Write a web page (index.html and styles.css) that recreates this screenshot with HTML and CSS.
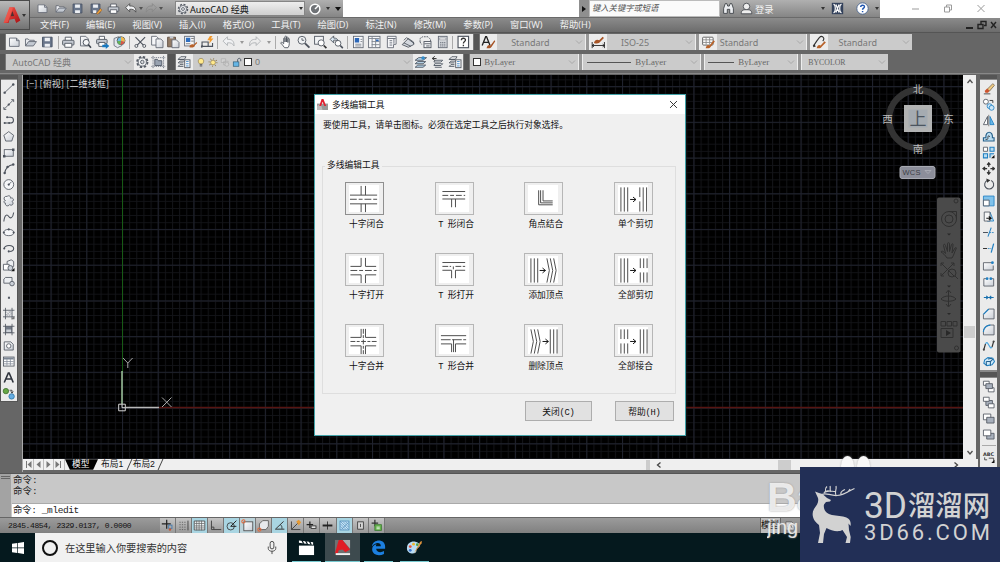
FILE: index.html
```html
<!DOCTYPE html>
<html lang="zh-CN">
<head>
<meta charset="utf-8">
<title>AutoCAD</title>
<link rel="stylesheet" href="styles.css">
</head>
<body>
<svg class="defs" width="0" height="0">
  <defs>
    <linearGradient id="g-red" x1="0" y1="0" x2="1" y2="1"><stop offset="0" stop-color="#ff5a4c"/><stop offset="1" stop-color="#a80f14"/></linearGradient>
    <linearGradient id="g-page" x1="0" y1="0" x2="1" y2="1"><stop offset="0" stop-color="#fff"/><stop offset="1" stop-color="#c9ced6"/></linearGradient>
  </defs>
  <symbol id="new" viewBox="0 0 16 16"><path d="M2.500 3.500h8l3 3v6.500h-11z" fill="url(#g-page)" stroke="#626873"/><path d="M10.500 3.500v3h3" fill="none" stroke="#626873"/></symbol>
  <symbol id="open" viewBox="0 0 16 16"><path d="M2.500 12.500v-8h3l1.500 1.500h5.500v2" fill="#e8eaee" stroke="#626873"/><path d="M2.500 12.500l3.500-5h9l-3.500 5z" fill="#c3c9d2" stroke="#626873"/></symbol>
  <symbol id="save" viewBox="0 0 16 16"><path d="M2.500 2.500h11v11h-11z" fill="#69768b" stroke="#465062"/><path d="M5 3h6v4H5zM5 10h6v3.500H5z" fill="#edf0f4"/></symbol>
  <symbol id="saveas" viewBox="0 0 16 16"><path d="M2.500 2.500h11v11h-11z" fill="#69768b" stroke="#465062"/><path d="M5 3h6v4H5zM5 10h4v3.500H5z" fill="#edf0f4"/><path d="M9 14l5-6 2 2-5 5z" fill="#eba23b" stroke="#8a4d20" stroke-width=".6"/></symbol>
  <symbol id="print" viewBox="0 0 16 16"><path d="M4.500 6V2.500h7V6" fill="#fff" stroke="#4d535d"/><rect x="1.500" y="6" width="13" height="5.500" rx="1" fill="#c3c8d0" stroke="#4d535d"/><path d="M4 9.500h8v4.500H4z" fill="#fff" stroke="#4d535d"/></symbol>
  <symbol id="preview" viewBox="0 0 16 16"><path d="M2.500 1.500h6l3 3v8h-9z" fill="url(#g-page)" stroke="#626873"/><circle cx="9" cy="8.500" r="3.500" fill="#f5f6f8" stroke="#3f4650"/><path d="M11.500 11l3 3.500" stroke="#3f4650" stroke-width="1.800"/></symbol>
  <symbol id="publish" viewBox="0 0 16 16"><path d="M4.500 5V1.500h6V5" fill="#fff" stroke="#4d535d"/><rect x="1.500" y="5" width="12" height="5" rx="1" fill="#c3c8d0" stroke="#4d535d"/><path d="M4 8.500h7V13H4z" fill="#fff" stroke="#4d535d"/><path d="M8 11h4V9l4 3.500-4 3.500v-2H8z" fill="#1878c0"/></symbol>
  <symbol id="dwf" viewBox="0 0 16 16"><path d="M2 4l5-2 4 2v8l-5 2.500L2 12z" fill="#e3e7ec" stroke="#68707c"/><circle cx="10" cy="6.500" r="4.500" fill="#6cbce8" stroke="#555"/><path d="M10 6.500V2a4.500 4.500 0 0 1 4 6z" fill="#f2b84b"/><path d="M10 6.500l4 1.500a4.500 4.500 0 0 1-5 3z" fill="#da5747"/><path d="M10 6.500L9 11a4.500 4.500 0 0 1-3.500-4z" fill="#64b257"/></symbol>
  <symbol id="cut" viewBox="0 0 16 16"><path d="M2.500 2.500l9 9M13.500 2.500l-9 9" stroke="#4d535d" stroke-width="1.300"/><circle cx="3.500" cy="12.500" r="1.700" fill="none" stroke="#4d535d"/><circle cx="12.500" cy="12.500" r="1.700" fill="none" stroke="#4d535d"/></symbol>
  <symbol id="copy" viewBox="0 0 16 16"><path d="M1.500 1.500h5.500l2 2v8h-7.500z" fill="#f6f7f9" stroke="#626873"/><path d="M6.500 4.500h5.500l2.500 2.500v7.500h-8z" fill="url(#g-page)" stroke="#626873"/></symbol>
  <symbol id="paste" viewBox="0 0 16 16"><path d="M1.500 2.500h9v11h-9z" fill="#927b66" stroke="#5c4c40"/><path d="M4 1h4v3H4z" fill="#c7cbd2"/><path d="M6.500 5.500h5l3 3v6h-8z" fill="url(#g-page)" stroke="#626873"/></symbol>
  <symbol id="match" viewBox="0 0 16 16"><rect x="1.500" y="1.500" width="11" height="11" fill="#f5f6f8" stroke="#626873"/><path d="M3 3h5v5H3z" fill="#2f6fc0"/><path d="M9 4h3M9 7h3M3 10h5" stroke="#777"/><path d="M7 14c0-3 3-4 5-3l3-3 1 1-3 3c0 2-3 3-6 2z" fill="#b8622a"/></symbol>
  <symbol id="block" viewBox="0 0 16 16"><path d="M2 8h7v5H2zM2 13l-1 1M9 13h5V9" fill="none" stroke="#4d535d" stroke-width="1.300"/><path d="M11 1l-3 5h3l-1 4 5-6h-3l2-3z" fill="#f29a2e"/><circle cx="2" cy="13" r="1.300" fill="#4d535d"/></symbol>
  <symbol id="undo" viewBox="0 0 16 16"><path d="M2 7l5-5v3c5-.5 8 2 7.500 7.500C13 9.500 10.500 8.500 7 9v3z" fill="#f1f2f4" stroke="currentColor"/></symbol>
  <symbol id="redo" viewBox="0 0 16 16"><path d="M14 7L9 2v3C4 4.500 1 7 1.500 12.500 3 9.500 5.500 8.500 9 9v3z" fill="none" stroke="currentColor"/></symbol>
  <symbol id="hand" viewBox="0 0 16 16"><path d="M6 14.500c-1.500-2-3-4-4.500-5.500 1-1.500 2.500 0 3.500 1V4c0-1 1.500-1 1.500 0v4-6c0-1 1.700-1 1.700 0v6-5c0-1 1.600-1 1.600 0v5.500-4c0-1 1.600-1 1.600 0V10c0 2-.5 3-1.500 4.500z" fill="#fff" stroke="#4d535d"/></symbol>
  <symbol id="zoomrt" viewBox="0 0 16 16"><circle cx="6.500" cy="6" r="4.500" fill="#f2f4f6" stroke="#4d535d"/><path d="M10 9.500l5 5" stroke="#4d535d" stroke-width="2.200"/><path d="M6.500 3.500V6h2.500" fill="none" stroke="#4d535d"/></symbol>
  <symbol id="zoomwin" viewBox="0 0 16 16"><rect x="1.500" y="1.500" width="10" height="9" fill="#f2f4f6" stroke="#4d535d"/><circle cx="9" cy="9" r="3.500" fill="#fff" stroke="#4d535d"/><path d="M12 12l3 3" stroke="#333" stroke-width="2"/></symbol>
  <symbol id="zoomprev" viewBox="0 0 16 16"><path d="M1 5l4-4v2.500c3 0 5 1 5 4-1-1.500-3-2-5-1.500V9z" fill="#dce8f2" stroke="#4d535d"/><circle cx="10" cy="9.500" r="3.300" fill="#fff" stroke="#4d535d"/><path d="M12.500 12l3 3" stroke="#4d535d" stroke-width="2"/></symbol>
  <symbol id="props" viewBox="0 0 16 16"><rect x="2.500" y="1.500" width="11" height="13" fill="#f7f8fa" stroke="#626873"/><path d="M4 3.500h5v5H4z" fill="#2c67b8"/><path d="M10.500 5h2M10.500 7.500h2M4.500 10.500h7M4.500 12.500h7" stroke="#7a808a"/></symbol>
  <symbol id="dc" viewBox="0 0 16 16"><rect x="1.500" y="1.500" width="13" height="13" fill="#f7f8fa" stroke="#626873"/><path d="M2 4h12M5.500 2v12M9.500 4v10M5 7.500h9M5 11h9" stroke="#7d838d"/><path d="M10 5h3v2h-3z" fill="#2c67b8"/></symbol>
  <symbol id="palette" viewBox="0 0 16 16"><path d="M3.500 1.500h10v9l-3 .5v3.500h-7z" fill="#f5f6f8" stroke="#626873"/><path d="M4 4h9M6 6.500h3M6 9h3M6 11.500h3M11 4v6" stroke="#626873"/></symbol>
  <symbol id="sheet" viewBox="0 0 16 16"><path d="M1 11l7-7 6 4v3l-6 3z" fill="#d4d8de" stroke="#4d535d"/><path d="M3 6l3-3 9 7M3 9l8 4" fill="none" stroke="#4d535d"/></symbol>
  <symbol id="markup" viewBox="0 0 16 16"><path d="M2 8V4l3-2h6l3 3v3M2 8l2 3" fill="none" stroke="#4d535d" stroke-dasharray="2 1"/><rect x="6.500" y="7.500" width="8" height="7" fill="#f5f6f8" stroke="#4d535d"/><path d="M7 10h7M9 12.500h4" stroke="#4d535d"/></symbol>
  <symbol id="calc" viewBox="0 0 16 16"><rect x="3.500" y="1.500" width="10" height="13" fill="#d7dade" stroke="#626873"/><path d="M5 3.500h7v2H5z" fill="#fff" stroke="#626873" stroke-width=".5"/><path d="M5.500 8.500h6M5.500 10.500h6M5.500 12.500h6" stroke="#626873" stroke-dasharray="1.500 .8"/></symbol>
  <symbol id="help" viewBox="0 0 16 16"><rect x="2" y="1.500" width="12" height="13" fill="#fff" stroke="#4d535d" stroke-width="1.300"/><path d="M5.800 6c0-3 4.700-3 4.700-.3 0 1.600-2.400 1.900-2.400 3.900M8.100 11.200v1.600" fill="none" stroke="#333" stroke-width="1.500"/></symbol>
  <symbol id="gear" viewBox="0 0 16 16"><circle cx="8" cy="8" r="6" fill="none" stroke="#555b65" stroke-width="2" stroke-dasharray="2.700 2"/><circle cx="8" cy="8" r="4.700" fill="#eef0f2" stroke="#555b65"/><circle cx="8" cy="8" r="2" fill="#d8dade" stroke="#555b65"/></symbol>
  <symbol id="wsave" viewBox="0 0 16 16"><path d="M2 1v14M14 1v14M0 3h16M0 13h16" stroke="#6b7280" stroke-dasharray="1.500 1"/><path d="M4 5h3l1 1.500h4V12H4z" fill="#98a2b0" stroke="#4d5664"/></symbol>
  <symbol id="layers" viewBox="0 0 16 16"><path d="M1 5l3-3h6L8 5zM1 9l2-2h6M1 13l2-2h4M1 5h7M1 9h6M1 13h6" fill="#f4f5f7" stroke="#4d535d"/><rect x="8.500" y="5.500" width="6" height="9" fill="#fff" stroke="#4d535d"/><path d="M10 7.500h3M10 10h3M10 12.500h3" stroke="#367fc0"/></symbol>
  <symbol id="laystack" viewBox="0 0 16 16"><path d="M1 6l4-3h9l-4 3zM1 10l3-2.500h9L10 10zM1 14l3-2.500h9L10 14z" fill="#bcd9ee" stroke="#48515e"/><circle cx="10" cy="3.500" r="2" fill="#318bc9"/></symbol>
  <symbol id="layprev" viewBox="0 0 16 16"><path d="M4 6h9l-2 2H3zM4 10h9l-2 2H3zM4 14h8" fill="#fff" stroke="#48515e"/><path d="M6 4H1.500M4 1.500L1 4l3 2" fill="none" stroke="#222"/></symbol>
  <symbol id="bulb" viewBox="0 0 16 16"><path d="M5.500 10C2 6 4 1.500 8 1.500S14 6 10.500 10z" fill="#ffe98b" stroke="#8a7440"/><path d="M6 11.500h4M6 13.500h4" stroke="#555" stroke-width="1.500"/></symbol>
  <symbol id="sun" viewBox="0 0 16 16"><circle cx="8" cy="8" r="6" fill="none" stroke="#8a7440" stroke-width="2.500" stroke-dasharray="1 3.710"/><circle cx="8" cy="8" r="3.800" fill="#ffe98b" stroke="#8a7440"/></symbol>
  <symbol id="vpf" viewBox="0 0 16 16"><path d="M2 2h7v6H2zM6 6h7v6H6z" fill="#d2d2d2" stroke="#a9a9a9"/><circle cx="11" cy="11" r="3" fill="#d0d0d0" stroke="#a9a9a9"/></symbol>
  <symbol id="unlock" viewBox="0 0 16 16"><path d="M9 7V4c0-3.500 5-3.500 5 0v2" fill="none" stroke="#4f5966" stroke-width="1.500"/><rect x="2" y="7" width="9" height="7" fill="#65b5e5" stroke="#27536f"/></symbol>
  <symbol id="textstyle" viewBox="0 0 16 16"><path d="M1 12L5 2h1l4 10M2.500 8.500h6" fill="none" stroke="#222" stroke-width="1.500"/><path d="M6 15c1-4 3-4 4.500-3L15 6l1 1-4 6c-1 2-3 2.500-6 2z" fill="#a75527"/></symbol>
  <symbol id="dimstyle" viewBox="0 0 16 16"><path d="M1 8v7M15 8v7M1 12h14M3 10.500L1 12l2 1.500M13 10.500l2 1.500-2 1.500" fill="none" stroke="#222"/><path d="M3 9c1-4 4-4 6-3l4-4 1.500 1.500-4 4C9 10 6 10 3 9z" fill="#a75527"/></symbol>
  <symbol id="tabstyle" viewBox="0 0 16 16"><rect x="1.500" y="2.500" width="12" height="9" rx="1" fill="#fff" stroke="#555"/><path d="M1.500 5.500h12M1.500 8.500h12M5.500 3v8M9.500 3v8" stroke="#8a8a8a"/><path d="M5 15c1-4 3-4 4.500-3L14 6l1.500 1.500L11 13c-1 2-3 2.500-6 2z" fill="#b8622a"/></symbol>
  <symbol id="mlstyle" viewBox="0 0 16 16"><path d="M1 13l4-6 3-4c3-3 7 0 4 4" fill="none" stroke="#333" stroke-width="1.300"/><path d="M1 14l1-4 2 3z" fill="#333"/><path d="M5 15c1-4 3-4 4.500-3L14 7l1.500 1.500L11 13c-1 2-3 2.500-6 2z" fill="#b8622a"/></symbol>

  <symbol id="line" viewBox="0 0 16 16"><path d="M3 13L13.500 3" stroke="#4d535d"/><circle cx="3" cy="13" r="1.500" fill="#4d535d"/><circle cx="13.500" cy="3" r="1.500" fill="#4d535d"/></symbol>
  <symbol id="xline" viewBox="0 0 16 16"><path d="M2.500 13.500L13.500 2.500M2 11v3h3M11 2h3v3" fill="none" stroke="#4d535d"/><circle cx="8" cy="8" r="1.400" fill="#4d535d"/></symbol>
  <symbol id="pline" viewBox="0 0 16 16"><path d="M6 4h4c5 0 5 7 0 7H3" fill="none" stroke="#4d535d" stroke-width="1.300"/><circle cx="6" cy="4" r="1.300" fill="#4d535d"/><circle cx="3" cy="11" r="1.300" fill="#4d535d"/><circle cx="8.500" cy="11" r="1.300" fill="#4d535d"/></symbol>
  <symbol id="polygon" viewBox="0 0 16 16"><path d="M8 2l6 4.500-2.300 7H4.300L2 6.500z" fill="url(#g-page)" stroke="#4d535d"/></symbol>
  <symbol id="rect" viewBox="0 0 16 16"><rect x="2.500" y="4.500" width="11" height="8" fill="url(#g-page)" stroke="#4d535d"/><path d="M12 3h3v3h-3zM1 11h3v3H1z" fill="#4d535d"/></symbol>
  <symbol id="arc" viewBox="0 0 16 16"><path d="M3 13.500C4 8 7 4 13.500 3" fill="none" stroke="#4d535d" stroke-width="1.300"/><circle cx="3" cy="13.500" r="1.500" fill="#4d535d"/><circle cx="6.500" cy="6" r="1.500" fill="#4d535d"/><circle cx="13.500" cy="3" r="1.500" fill="#4d535d"/></symbol>
  <symbol id="circle" viewBox="0 0 16 16"><circle cx="8" cy="8" r="6" fill="#f6f7f9" stroke="#4d535d"/><path d="M8 8l3.500-3.500" stroke="#4d535d"/><circle cx="8" cy="8" r="1.400" fill="#4d535d"/></symbol>
  <symbol id="cloud" viewBox="0 0 16 16"><path d="M4 8C1 7 2 2 6 3c2-2 5 0 4 2 4-1 5 3 2 4 3 3 0 6-3 4-2 3-6 1-5-2-3 0-2-3 0-3z" fill="url(#g-page)" stroke="#4d535d"/></symbol>
  <symbol id="spline" viewBox="0 0 16 16"><path d="M2 14C3 5 6 5 8 8s5 2 6-5" fill="none" stroke="#4d535d" stroke-width="1.300"/></symbol>
  <symbol id="ellipse" viewBox="0 0 16 16"><ellipse cx="8" cy="8" rx="6" ry="3.800" fill="#f6f7f9" stroke="#4d535d"/><circle cx="2" cy="8" r="1.300" fill="#4d535d"/><circle cx="14" cy="8" r="1.300" fill="#4d535d"/><circle cx="8" cy="4.200" r="1.300" fill="#4d535d"/></symbol>
  <symbol id="elarc" viewBox="0 0 16 16"><path d="M2.500 8C3 3 14 3 14 8c0 2-2 3.500-5 3.500" fill="none" stroke="#4d535d" stroke-width="1.300"/><circle cx="2.500" cy="8" r="1.300" fill="#4d535d"/><circle cx="8" cy="11.500" r="1.300" fill="#4d535d"/></symbol>
  <symbol id="insert" viewBox="0 0 16 16"><path d="M6 3l5-2 3 2v6l-3 2H6z" fill="#eceef1" stroke="#4d535d"/><path d="M1.500 6.500h7v7h-7z" fill="#fff" stroke="#4d535d"/><circle cx="10" cy="11" r="3" fill="#ccd1d9" stroke="#4d535d"/><path d="M15 11v4h-4z" fill="#111"/></symbol>
  <symbol id="mkblock" viewBox="0 0 16 16"><path d="M2 10V5l2-2h8v6" fill="#eceef1" stroke="#4d535d"/><path d="M2 10h7" stroke="#4d535d"/><circle cx="12" cy="10.500" r="2.800" fill="#ccd1d9" stroke="#4d535d"/></symbol>
  <symbol id="point" viewBox="0 0 16 16"><rect x="7" y="7" width="2.500" height="2.500" fill="#555b65"/></symbol>
  <symbol id="hatch" viewBox="0 0 16 16"><path d="M4 1v14M12 1v14M1 4h14M1 12h14" stroke="#4d535d"/><path d="M4 5l7 7M4 8l4 4M7 4l5 5M4 11l8-7M7 12l5-5" stroke="#9298a2" stroke-width=".7"/><path d="M15 11v4h-4z" fill="#777"/></symbol>
  <symbol id="grad" viewBox="0 0 16 16"><path d="M4 4h8v8H4z" fill="#737b87"/><path d="M5 8h6v3H5z" fill="#cbd0d6"/><path d="M4 1v14M12 1v14M1 4h14M1 12h14" stroke="#4d535d"/></symbol>
  <symbol id="region" viewBox="0 0 16 16"><path d="M2.500 3.500h8l3 3v7h-11z" fill="url(#g-page)" stroke="#4d535d"/><circle cx="8" cy="8.500" r="2.700" fill="#fff" stroke="#4d535d"/></symbol>
  <symbol id="table" viewBox="0 0 16 16"><rect x="1.500" y="2.500" width="13" height="11" fill="#fff" stroke="#4d535d"/><path d="M2 3h12v2.500H2z" fill="#7d8795"/><path d="M2 8h12M2 10.800h12M5.800 5v8M10 5v8" stroke="#88909c"/></symbol>
  <symbol id="mtext" viewBox="0 0 16 16"><path d="M2.500 14L7.500 2.500h1l5 11.500M4.500 9.800h7" fill="none" stroke="#30353e" stroke-width="2"/></symbol>
  <symbol id="addsel" viewBox="0 0 16 16"><circle cx="4.500" cy="5" r="3.300" fill="#65a744" stroke="#3d6e2c"/><circle cx="11.500" cy="11.500" r="3.300" fill="#66ade2" stroke="#2f77a8"/><path d="M9 4h3v3M10.500 5.500L12 7.500l1.500-2" fill="none" stroke="#333"/></symbol>

  <symbol id="erase" viewBox="0 0 16 16"><path d="M6 9l7-7 2 2-6 7z" fill="#efca82" stroke="#7a6b50"/><path d="M3 11l3-3 3 3-2 2H4z" fill="#cd532d"/><path d="M2 14.500h8" stroke="#333"/></symbol>
  <symbol id="mcopy" viewBox="0 0 16 16"><circle cx="4.500" cy="4.500" r="3" fill="#fff" stroke="#4d535d"/><circle cx="9" cy="10" r="3" fill="#cde7f8" stroke="#2180c2"/><circle cx="11.500" cy="12" r="3" fill="#cde7f8" stroke="#2180c2"/><path d="M9 3h4v3" fill="none" stroke="#222"/></symbol>
  <symbol id="mirror" viewBox="0 0 16 16"><path d="M6.500 3v10H1.500z" fill="#fff" stroke="#4d535d"/><path d="M9.500 3v10h5z" fill="#66b7e8" stroke="#2180c2"/><path d="M8 1v14" stroke="#333" stroke-width=".7"/></symbol>
  <symbol id="offset" viewBox="0 0 16 16"><path d="M1.500 13.500v-4h3c-1-9 9-9 8 0h2v4z" fill="#b9dcf1" stroke="#2a638c" stroke-width="1.400"/><path d="M4 11.500h2c1 0 1-1 1-3s2-2 2 0" fill="none" stroke="#333"/></symbol>
  <symbol id="array" viewBox="0 0 16 16"><path d="M1.500 1.500h5v5h-5z" fill="#fff" stroke="#4d535d"/><path d="M9.500 1.500h5v5h-5zM1.500 9.500h5v5h-5zM9.500 14.500v-5h5" fill="#b9dcf1" stroke="#2180c2" stroke-width="1.300"/><path d="M15 11v4h-4z" fill="#111"/></symbol>
  <symbol id="move" viewBox="0 0 16 16"><path d="M8 1v14M1 8h14M6 3.500L8 1l2 2.500M6 12.500L8 15l2-2.500M3.500 6L1 8l2.500 2M12.500 6L15 8l-2.500 2" fill="none" stroke="#333" stroke-width="1.500"/><rect x="6" y="6" width="4" height="4" fill="#ececec"/></symbol>
  <symbol id="rotate" viewBox="0 0 16 16"><path d="M6 3a5.500 5.500 0 1 0 5 0" fill="none" stroke="#4d535d" stroke-width="1.300"/><path d="M5 .500l5 2.200-4 3z" fill="#333"/></symbol>
  <symbol id="scale" viewBox="0 0 16 16"><path d="M1.500 2.500h13v12h-13z" fill="#80c2eb" stroke="#2180c2"/><path d="M1.500 7.500h7v7h-7z" fill="#fff" stroke="#4d535d"/></symbol>
  <symbol id="stretch" viewBox="0 0 16 16"><path d="M9.500 2.500l4.500 11H6" fill="#b9dcf1" stroke="#2180c2"/><path d="M2.500 2.500h7v11h-7z" fill="#f6f6f6" stroke="#4d535d"/><path d="M5 10h5M8 8l3 2-3 2" fill="none" stroke="#111" stroke-width="1.300"/></symbol>
  <symbol id="trim" viewBox="0 0 16 16"><path d="M1 8h6" stroke="#4d535d" stroke-width="1.300"/><path d="M11 2L7 13" stroke="#2180c2" stroke-width="1.300"/><path d="M9 8h6" stroke="#2180c2" stroke-dasharray="2 1"/></symbol>
  <symbol id="extend" viewBox="0 0 16 16"><path d="M1 8h5" stroke="#333" stroke-width="1.300"/><path d="M7 8h4" stroke="#2180c2" stroke-dasharray="2 1"/><path d="M14 2l-3 11" stroke="#2180c2" stroke-width="1.500"/></symbol>
  <symbol id="brkpt" viewBox="0 0 16 16"><path d="M12 4.500H1.500v9h12V8" fill="url(#g-page)" stroke="#4d535d"/><circle cx="12.500" cy="4.500" r="1.700" fill="#2180c2"/></symbol>
  <symbol id="brk" viewBox="0 0 16 16"><path d="M5 4.500H2v9h12v-9h-3" fill="url(#g-page)" stroke="#4d535d"/><circle cx="6" cy="4.500" r="1.700" fill="#2180c2"/><circle cx="10.500" cy="4.500" r="1.700" fill="#2180c2"/></symbol>
  <symbol id="join" viewBox="0 0 16 16"><path d="M2 8h12M5 6l2 2-2 2M11 6L9 8l2 2" fill="none" stroke="#176fae" stroke-width="1.400"/></symbol>
  <symbol id="chamfer" viewBox="0 0 16 16"><path d="M1.500 14.500V9L8 2.500h6.500v12z" fill="url(#g-page)" stroke="#4d535d"/><path d="M1.500 9L8 2.500" stroke="#2180c2" stroke-width="1.500"/></symbol>
  <symbol id="fillet" viewBox="0 0 16 16"><path d="M1.500 14.500V11c0-5 4-8.500 8.500-8.500h4.500v12z" fill="url(#g-page)" stroke="#4d535d"/><path d="M1.500 11C1.500 6 5.500 2.500 10 2.500" fill="none" stroke="#2180c2" stroke-width="1.500"/></symbol>
  <symbol id="blend" viewBox="0 0 16 16"><path d="M2 13l2-7M14 3l-2 7" stroke="#333" stroke-width="1.500"/><path d="M4 6c3-6 5 8 8 4" fill="none" stroke="#4ca6e0" stroke-width="1.500"/><circle cx="2" cy="13" r="1.300" fill="#444"/><circle cx="14" cy="3" r="1.300" fill="#444"/></symbol>
  <symbol id="explode" viewBox="0 0 16 16"><path d="M3 6l4-3 6 1 2 4-3 4-6 1-4-3z" fill="#d0eafa" stroke="#2180c2" stroke-width="1.300"/><path d="M5 8h5v5M10 8l3-3M5 8v5M7 5l5-1" fill="none" stroke="#26618d" stroke-width="1.300"/></symbol>
  <symbol id="ord1" viewBox="0 0 16 16"><path d="M1.500 1.500h7v5h-7zM7.500 9.500h7v5h-7z" fill="#fff" stroke="#4d535d"/><path d="M4.500 4.500h8v6h-8z" fill="#a8b0bc" stroke="#4d535d"/></symbol>
  <symbol id="ord2" viewBox="0 0 16 16"><path d="M4.500 5.500h8v6h-8z" fill="#a8b0bc" stroke="#4d535d"/><path d="M1.500 1.500h7v5h-7zM7.500 9.500h7v5h-7z" fill="#fff" stroke="#4d535d"/></symbol>
  <symbol id="ord3" viewBox="0 0 16 16"><path d="M1.500 2.500h9v7h-9z" fill="#fff" stroke="#4d535d"/><path d="M5.500 6.500h9v7h-9z" fill="#a8b0bc" stroke="#4d535d"/></symbol>
  <symbol id="ord4" viewBox="0 0 16 16"><path d="M5.500 6.500h9v7h-9z" fill="#a8b0bc" stroke="#4d535d"/><path d="M1.500 2.500h9v7h-9z" fill="#fff" stroke="#4d535d"/></symbol>
  <symbol id="chev" viewBox="0 0 8 8"><path d="M1 2.500l3 3 3-3" fill="none" stroke="#a9a9a9"/></symbol>
  <symbol id="acad" viewBox="0 0 24 24"><path d="M2 21L9 2h6l7 16-5 3-2-5-6 1-1 4z" fill="url(#g-red)"/><path d="M10.500 13l2-6.500 2 6z" fill="#4e3030"/><path d="M9 2l4 1-6 17-5 1z" fill="#f7695b" opacity=".55"/></symbol>
</svg>

<header class="app-head">
  <div class="app-btn"><svg class="app-logo"><use href="#acad"/></svg><i class="tri"></i></div>
  <div class="head-rows">
    <div class="titlebar">
      <div class="qat">
        <svg class="q"><use href="#new"/></svg><svg class="q"><use href="#open"/></svg><svg class="q"><use href="#save"/></svg><svg class="q"><use href="#saveas"/></svg><svg class="q"><use href="#print"/></svg><svg class="q undo"><use href="#undo"/></svg><i class="tri q-tri"></i><svg class="q faded"><use href="#redo"/></svg><i class="tri q-tri"></i>
      </div>
      <div class="ws-combo"><svg class="ws-gear"><use href="#gear"/></svg><span>AutoCAD 经典</span><i class="tri"></i></div>
      <div class="qat-end"><svg viewBox="0 0 16 16"><circle cx="8" cy="8" r="6.500" fill="#6f7276" stroke="#fff" stroke-width="2"/><path d="M8 8l4-4" stroke="#fff" stroke-width="2"/></svg><i class="tri"></i><i class="tri big"></i></div>
      <div class="caption"></div>
      <div class="search-arrow"></div>
      <div class="search">键入关键字或短语</div>
      <div class="info">
        <svg viewBox="0 0 16 16" class="binoc"><path d="M2 14V8l2-6h2l1 3h2l1-3h2l2 6v6H9.500V9h-3v5z" fill="#eceef1" stroke="#33373c"/></svg>
        <svg viewBox="0 0 16 16" class="user"><circle cx="8" cy="5.500" r="4" fill="#eee" stroke="#3b3f45"/><path d="M1.500 14.500c0-5 3-5 6.500-5s6.500 0 6.500 5z" fill="#eee" stroke="#3b3f45"/></svg>
        <span class="login">登录</span><i class="tri"></i>
        <svg viewBox="0 0 16 16" class="exch"><rect x="1" y="1" width="14" height="14" fill="#33415b"/><path d="M3 3c3 0 3 10 0 10M13 3c-3 0-3 10 0 10M6 3l4 10M10 3L6 13" stroke="#fff" stroke-width="1.500" fill="none"/></svg>
        <svg viewBox="0 0 16 16" class="ask"><circle cx="8" cy="8" r="7" fill="#fff" stroke="#3b5b8c"/><path d="M5.800 6.200c0-3 4.600-3 4.600-.4 0 1.700-2.300 1.800-2.300 3.700M8.100 11v1.700" fill="none" stroke="#1f55b0" stroke-width="1.800"/></svg>
        <i class="tri"></i>
      </div>
      <svg class="winctl" viewBox="0 0 120 17"><path d="M32 8.500h7M64.500 6.500h5v5h-5zM66.500 6.500v-2h5v5h-2M97.500 4.500l7 7M104.500 4.500l-7 7" fill="none" stroke="#9b9b9b"/></svg>
    </div>
    <nav class="menubar">
      <span>文件(F)</span><span>编辑(E)</span><span>视图(V)</span><span>插入(I)</span><span>格式(O)</span><span>工具(T)</span><span>绘图(D)</span><span>标注(N)</span><span>修改(M)</span><span>参数(P)</span><span>窗口(W)</span><span>帮助(H)</span>
      <svg class="docctl" viewBox="0 0 34 12"><path d="M1 9h7" stroke="#222" stroke-width="2"/><path d="M13 5.500h5v4h-5zM16 5V2.500h5v4h-2M26 3l5 6M31 3l-5 6" fill="none" stroke="#222" stroke-width="1.400"/></svg>
    </nav>
  </div>
</header>

<div class="tools row1">
  <i class="grip"></i>
  <div class="strip std">
    <svg class="t"><use href="#new"/></svg><svg class="t"><use href="#open"/></svg><svg class="t"><use href="#save"/></svg><i class="sep"></i>
    <svg class="t"><use href="#print"/></svg><svg class="t"><use href="#preview"/></svg><svg class="t"><use href="#publish"/></svg><svg class="t"><use href="#dwf"/></svg><i class="sep"></i>
    <svg class="t"><use href="#cut"/></svg><svg class="t"><use href="#copy"/></svg><svg class="t"><use href="#paste"/></svg><svg class="t"><use href="#match"/></svg><svg class="t"><use href="#block"/></svg><i class="sep"></i>
    <svg class="t dim"><use href="#undo"/></svg><i class="tri t-tri"></i><svg class="t dim"><use href="#redo"/></svg><i class="tri t-tri"></i><i class="sep"></i>
    <svg class="t"><use href="#hand"/></svg><svg class="t"><use href="#zoomrt"/></svg><svg class="t"><use href="#zoomwin"/></svg><svg class="t"><use href="#zoomprev"/></svg><i class="sep"></i>
    <svg class="t"><use href="#props"/></svg><svg class="t"><use href="#dc"/></svg><svg class="t"><use href="#palette"/></svg><svg class="t"><use href="#sheet"/></svg><svg class="t"><use href="#markup"/></svg><svg class="t"><use href="#calc"/></svg><i class="sep"></i>
    <svg class="t"><use href="#help"/></svg>
  </div>
  <i class="grip wide"></i>
  <div class="strip styles">
    <svg class="t"><use href="#textstyle"/></svg><div class="combo w-text"><span>Standard</span><svg><use href="#chev"/></svg></div><i class="bar"></i>
    <svg class="t"><use href="#dimstyle"/></svg><div class="combo w-dim"><span>ISO-25</span><svg><use href="#chev"/></svg></div><i class="bar"></i>
    <svg class="t"><use href="#tabstyle"/></svg><div class="combo w-tab"><span>Standard</span><svg><use href="#chev"/></svg></div><i class="bar"></i>
    <svg class="t"><use href="#mlstyle"/></svg><div class="combo w-ml"><span>Standard</span><svg><use href="#chev"/></svg></div>
  </div>
</div>
<div class="tools row2">
  <i class="grip"></i>
  <div class="strip"><div class="combo w-ws"><span>AutoCAD 经典</span><svg><use href="#chev"/></svg></div><svg class="t"><use href="#gear"/></svg><svg class="t"><use href="#wsave"/></svg></div>
  <i class="grip wide first"></i>
  <div class="strip"><svg class="t"><use href="#layers"/></svg>
    <div class="combo w-layer"><svg class="l"><use href="#bulb"/></svg><svg class="l"><use href="#sun"/></svg><svg class="l"><use href="#vpf"/></svg><svg class="l"><use href="#unlock"/></svg><i class="swatch"></i><span>0</span><svg><use href="#chev"/></svg></div>
    <svg class="t"><use href="#laystack"/></svg><svg class="t"><use href="#layprev"/></svg><svg class="t"><use href="#layers"/></svg></div>
  <i class="grip wide second"></i>
  <div class="strip serif">
    <div class="combo w-color"><i class="swatch"></i><span>ByLayer</span><svg><use href="#chev"/></svg></div><i class="bar"></i>
    <div class="combo w-lt"><i class="ln long"></i><span>ByLayer</span><svg><use href="#chev"/></svg></div><i class="bar"></i>
    <div class="combo w-lw"><i class="ln"></i><span>ByLayer</span><svg><use href="#chev"/></svg></div><i class="bar"></i>
    <div class="combo w-ps"><span>BYCOLOR</span><svg><use href="#chev"/></svg></div>
  </div>
</div>

<main class="work">
  <aside class="vtools left">
    <i class="vgrip"></i>
    <svg><use href="#line"/></svg><svg><use href="#xline"/></svg><svg><use href="#pline"/></svg><svg><use href="#polygon"/></svg><svg><use href="#rect"/></svg><svg><use href="#arc"/></svg><svg><use href="#circle"/></svg><svg><use href="#cloud"/></svg><svg><use href="#spline"/></svg><svg><use href="#ellipse"/></svg><svg><use href="#elarc"/></svg><svg><use href="#insert"/></svg><svg><use href="#mkblock"/></svg><svg><use href="#point"/></svg><svg><use href="#hatch"/></svg><svg><use href="#grad"/></svg><svg><use href="#region"/></svg><svg><use href="#table"/></svg><svg><use href="#mtext"/></svg><svg><use href="#addsel"/></svg>
  </aside>
  <section class="doc">
    <div class="doc-top">
      <svg class="canvas" viewBox="23 75 940 384">
        <defs>
          <pattern id="minor" x="122" y="408" width="7.143" height="7.143" patternUnits="userSpaceOnUse"><path d="M.5 0v7.143M0 .5h7.143" stroke="#131418"/></pattern>
          <pattern id="major" x="122" y="407.500" width="35.714" height="35.714" patternUnits="userSpaceOnUse"><path d="M.5 0v35.714M0 .5h35.714" stroke="#1f222d"/></pattern>
        </defs>
        <rect x="23" y="75" width="940" height="384" fill="#000"/>
        <rect x="23" y="75" width="940" height="384" fill="url(#minor)"/>
        <rect x="23" y="75" width="940" height="384" fill="url(#major)"/>
        <path d="M122.500 75v297" stroke="#175a15"/>
        <path d="M159 407.500h804" stroke="#571512" stroke-width="1.300"/>
        <path d="M122 371v33" stroke="#9fc69d" stroke-width="1.500"/>
        <path d="M126 407.500h33" stroke="#b9b9b9" stroke-width="1.500"/>
        <path d="M118.700 404.200h6.600v6.600h-6.600zM122 404.200v3.500h3.500" fill="none" stroke="#d5d5d5"/>
        <path d="M123 358l4.800 5 4.800-5M127.800 363v5M162 397.500l9.500 9.500M171.500 397.500l-9.500 9.500" fill="none" stroke="#aaa"/>
        <text x="26" y="87.300" class="vp-label" textLength="83">[−] [俯视] [二维线框]</text>
        <circle cx="918" cy="119" r="29" fill="none" stroke="#333" stroke-width="6.500"/>
        <path d="M904 105h28v27h-28z" fill="#b2b3b3"/><path d="M908.500 109.500h19v18h-19z" fill="#a5abb1"/>
        <text x="918" y="125" class="cube-face">上</text>
        <g class="compass"><text x="918" y="92.500">北</text><text x="918" y="153">南</text><text x="887.500" y="123">西</text><text x="948.500" y="123">东</text></g>
        <rect x="900" y="166.500" width="35" height="12" rx="2" fill="#8c8e9a" stroke="#a9abb3"/>
        <text x="902.500" y="174.500" class="wcs" textLength="18">WCS</text><path d="M925 170.500h6l-3 3z" fill="none" stroke="#b5b6be" stroke-width=".7"/>
        <rect x="937" y="197.500" width="23.500" height="155" rx="2" fill="#4a4a4a"/>
        <g fill="none" stroke="#303030">
          <circle cx="956" cy="201" r="2"/><circle cx="949" cy="219" r="7.500"/><circle cx="949" cy="219" r="4"/><path d="M949 211.500h7.500v7.500"/>
          <path d="M947 258c-2-3-4-5-6-6 1-2 3 0 4.500 1.500l-2-8c0-2 2-1 2 0l2 6v-8c0-1 2-1 2 0v8l2-7c.5-1 2-1 1.500.5l-1 8 3-5c1-1 2 0 1 1-2 4-2 6-4 9z"/>
          <path d="M941 263l13 13M954 263l-13 13M941 266v-3h3M951 263h3v3M941 273v3h3"/><circle cx="952" cy="273" r="4"/><path d="M955 276l3 3"/>
          <path d="M948.500 291v15M941 299c3-4 12-4 15 0-3 3-12 3-15 0M946 293l2.500-3 2.500 3M946 304l2.500 3 2.500-3"/>
          <path d="M941 321.500h4.500v4.500H941zM947 321.500h4.500v4.500H947zM953 321.500h4v4.500h-4zM941 328.500h12v9h-12z"/><circle cx="956.500" cy="348" r="2"/>
        </g>
        <path d="M947 233.500h4l-2 2zM947 285.500h4l-2 2zM947 313h4l-2 2zM946 330l5 3-5 3z" fill="#292929"/>
      </svg>
      <div class="vscroll"><svg viewBox="0 0 12 12"><path d="M3.500 8L6 5l2.500 3" fill="none" stroke="#4f4f4f" stroke-width="1.300"/></svg><i class="thumb"></i><svg viewBox="0 0 12 12"><path d="M3.500 4L6 7l2.500-3" fill="none" stroke="#4f4f4f" stroke-width="1.300"/></svg></div>
    </div>
    <div class="tabs">
      <svg class="tabnav" viewBox="0 0 42 11"><path d="M0 0h42v11H0z" fill="#f1f1f1"/><path d="M10.500 0v11M20.500 0v11M30.500 0v11M41.500 0v11" stroke="#bbb"/><path d="M3.500 2v7M37.500 2v7" stroke="#777"/><path d="M8.500 2v7l-4-3.500zM17.500 2v7l-4-3.500zM23.500 2v7l4-3.500zM32.500 2v7l4-3.500z" fill="#777"/></svg>
      <div class="tab active"><svg viewBox="0 0 34 11"><path d="M0 0h34l-5 11H5z" fill="#000"/></svg><span>模型</span></div>
      <div class="tab"><span>布局1</span><i></i></div>
      <div class="tab"><span>布局2</span><i></i></div>
      <div class="hscroll"><i class="split"></i><svg viewBox="0 0 10 10"><path d="M6.500 2.500L3.500 5l3 2.500" fill="none" stroke="#444" stroke-width="1.300"/></svg><i class="hthumb"></i><svg viewBox="0 0 10 10"><path d="M3.500 2.500l3 2.500-3 2.500" fill="none" stroke="#444" stroke-width="1.300"/></svg></div>
    </div>
  </section>
  <aside class="vtools right">
    <i class="vgrip"></i>
    <svg><use href="#erase"/></svg><svg><use href="#mcopy"/></svg><svg><use href="#mirror"/></svg><svg><use href="#offset"/></svg><svg><use href="#array"/></svg><svg><use href="#move"/></svg><svg><use href="#rotate"/></svg><svg><use href="#scale"/></svg><svg><use href="#stretch"/></svg><svg><use href="#trim"/></svg><svg><use href="#extend"/></svg><svg><use href="#brkpt"/></svg><svg><use href="#brk"/></svg><svg><use href="#join"/></svg><svg><use href="#chamfer"/></svg><svg><use href="#fillet"/></svg><svg><use href="#blend"/></svg><svg><use href="#explode"/></svg>
    <i class="vgrip mid"></i>
    <svg><use href="#ord1"/></svg><svg><use href="#ord2"/></svg><svg><use href="#ord3"/></svg><svg><use href="#ord4"/></svg><i class="vsep"></i>
    <svg viewBox="0 0 16 16"><text x="1" y="7" class="abc">ABC</text><path d="M3 9v3h3M8 10h6v4" fill="none" stroke="#333"/><path d="M15 12v4h-4z" fill="#111"/></svg><svg><use href="#ord3"/></svg>
  </aside>
</main>

<section class="cmd">
  <div class="cmd-grip"><i></i></div>
  <div class="cmd-body">
    <div class="history"><div>命令:</div><div>命令:</div></div>
    <div class="prompt">命令: _mledit</div>
  </div>
</section>

<footer class="status">
  <div class="coords">2845.4854, 2329.0137, 0.0000</div>
  <div class="modes">
    <span><svg viewBox="0 0 16 16"><path d="M7 1v11M1 6h11" stroke="#222" stroke-width="1.500"/><rect x="9.500" y="7.500" width="4" height="4" fill="none" stroke="#3a76b0"/><circle cx="11" cy="13" r="1.500" fill="#c65a35"/></svg></span>
    <span><svg viewBox="0 0 16 16"><path d="M3 4h8M3 7h8M3 10h8M3 13h8" stroke="#555" stroke-dasharray="1.500 1.500"/><path d="M13.500 2v12" stroke="#333"/></svg></span>
    <span class="on"><svg viewBox="0 0 16 16"><path d="M1.500 2.500h13v11h-13z" fill="#eef4f6" stroke="#444"/><path d="M2 5.500h12M2 8.500h12M2 11h12M4.500 2v12M7.500 2v12M10.500 2v12" stroke="#666" stroke-width=".9"/></svg></span>
    <span><svg viewBox="0 0 16 16"><path d="M3 2v11h12M3 10h3v3" fill="none" stroke="#444" stroke-width="1.200"/></svg></span>
    <span class="on"><svg viewBox="0 0 16 16"><circle cx="7" cy="9" r="4.500" fill="none" stroke="#333"/><path d="M7 9l7-7M7 9h7" stroke="#222" stroke-width="1.200"/></svg></span>
    <span class="on half"><svg viewBox="0 0 16 16"><rect x="3.500" y="3.500" width="11" height="11" fill="url(#g-page)" stroke="#444"/><circle cx="3" cy="3" r="2" fill="none" stroke="#e06b3f" stroke-width="1.300"/></svg></span>
    <span><svg viewBox="0 0 16 16"><path d="M3 6l4-4h7v7l-3 4H3z" fill="#e7e9ec" stroke="#555"/><circle cx="3" cy="13" r="2" fill="none" stroke="#e06b3f" stroke-width="1.300"/></svg></span>
    <span class="on"><svg viewBox="0 0 16 16"><path d="M13 3L3 12.500h11M9 7c2 1 2 3 2 5" fill="none" stroke="#333" stroke-width="1.200"/></svg></span>
    <span><svg viewBox="0 0 16 16"><path d="M3 3v10h11M3 13l8-8" fill="none" stroke="#444" stroke-width="1.200"/><path d="M9 3l3-2 3 3-3 4z" fill="#e69a34"/></svg></span>
    <span><svg viewBox="0 0 16 16"><path d="M6 3v8M2 7h8" stroke="#222" stroke-width="1.500"/><rect x="7.500" y="8.500" width="6" height="3" fill="#eee" stroke="#222"/></svg></span>
    <span><svg viewBox="0 0 16 16"><path d="M8 3v10" stroke="#222"/><path d="M2 8h12" stroke="#222" stroke-width="2.400"/></svg></span>
    <span class="on"><svg viewBox="0 0 16 16"><rect x="2.500" y="2.500" width="11" height="11" fill="#c4e2f5" stroke="#4f8bb8"/><path d="M3 6l7 7M3 9l4 4M3 3l10 10M6 3l7 7M9 3l4 4M13 4l-9 9" stroke="#4f8bb8" stroke-width=".8"/></svg></span>
    <span><svg viewBox="0 0 16 16"><rect x="4.500" y="3.500" width="7" height="9" fill="#d5d5d5" stroke="#333"/><path d="M8 6v4" stroke="#333"/></svg></span>
    <span><svg viewBox="0 0 16 16"><path d="M6 1v8M2 5h8" stroke="#333" stroke-width="1.500"/><rect x="6" y="7" width="8" height="7" fill="#65b34c" stroke="#3d7b32"/><path d="M8 10h4M8 12h4" stroke="#fff"/></svg></span>
  </div>
  <div class="space"><span>模型</span><svg viewBox="0 0 16 16"><path d="M2.500 2.500h8l3 3v8h-11z" fill="#ddd" stroke="#555"/><path d="M5 11l3-6 3 6" fill="none" stroke="#555"/></svg></div>
</footer>

<div class="taskbar">
  <div class="start"><svg viewBox="0 0 14 14"><path d="M1 2.700L6.300 2v4.600H1zM7 1.900L13 1v5.600H7zM1 7.300h5.300V12L1 11.300zM7 7.300h6V13l-6-.9z" fill="#fff"/></svg></div>
  <div class="tb-search"><i class="cortana"></i><span>在这里输入你要搜索的内容</span><svg viewBox="0 0 12 16"><rect x="4" y="1.500" width="4" height="8" rx="2" fill="none" stroke="#444"/><path d="M2 7v2c0 4 8 4 8 0V7M6 12v3" fill="none" stroke="#444"/></svg></div>
  <div class="apps">
    <span><svg viewBox="0 0 18 18"><path d="M1 7h16v10H1z" fill="#fff"/><path d="M1 1.500l15 2v2.500L1 4z" fill="#fff"/><path d="M4 1l2 4M8 1.500l2 4M12 2l2 4" stroke="#05181d" stroke-width="1.300"/></svg></span>
    <span class="cur"><svg viewBox="0 0 18 18"><path d="M1 1h16v16H1z" fill="#6d7171"/><path d="M9 1h8v9z" fill="#aaa"/><path d="M1 15L5 1h4l8 10-5 3-3-3-4 1-1 3z" fill="#e11d25"/><path d="M2 15h15v2H2z" fill="#f1f1f1"/></svg></span>
    <span><svg viewBox="0 0 18 18"><path d="M2 8C3-.5 16-.5 16 8v2.300H6.500c.3 4.200 5.500 4.300 8.300 2.500v3C9.500 18.500 2 17 2.300 10.500 2.500 7.500 4.500 6 7 5.500 6.500 6 6.200 7 6.200 7.700h5.300C11.500 2.500 5 3.500 2 8z" fill="#1c7fe0"/></svg></span>
    <span><svg viewBox="0 0 18 18"><path d="M1 10c0-6 5-8 9-7 5 1 6 5 3 6-2 1-2 2-2 4-1 4-10 3-10-3z" fill="#b9dcf4"/><circle cx="4.500" cy="8" r="1.500" fill="#e5513b"/><circle cx="8" cy="5.500" r="1.500" fill="#f1b72a"/><circle cx="12" cy="6" r="1.400" fill="#47a24a"/><circle cx="4.500" cy="12" r="1.500" fill="#3b74c9"/><path d="M8 16l7-13 2-1-.5 2.500z" fill="#dd923c"/></svg></span>
  </div>
</div>

<section class="dialog">
  <div class="dlg-title"><svg viewBox="0 0 12 12"><path d="M0 5h12v7H0z" fill="#999"/><path d="M0 8l4-3 2 7H0z" fill="#bbb"/><path d="M2.500 7.500L5 0h2l3 7.500H8L6 3 4.500 7.500z" fill="#e02030"/></svg><span>多线编辑工具</span><svg class="close" viewBox="0 0 10 10"><path d="M1.200 1.200l7.600 7.600M8.800 1.200L1.200 8.800" stroke="#333" stroke-width="1.100"/></svg></div>
  <p class="hint">要使用工具，请单击图标。必须在选定工具之后执行对象选择。</p>
  <fieldset class="group">
    <legend>多线编辑工具</legend>
    <div class="grid">
      <figure><div class="pic sel"><svg viewBox="0 0 38 32"><path d="M4 12.500h28M4 21.500h28M15.500 3v9.500M20 3v9.500M15.500 21.500V30M20 21.500V30"/><path d="M4 16.800h28" stroke-dasharray="7 2 4 2"/></svg></div><figcaption>十字闭合</figcaption></figure>
      <figure><div class="pic"><svg viewBox="0 0 38 32"><path d="M6.500 8.800h23.500M6.500 16.500h23.500M16 16.500V25M20 16.500V25"/><path d="M6.500 12.800h23.500" stroke-dasharray="6 2 4 2"/></svg></div><figcaption>T 形闭合</figcaption></figure>
      <figure><div class="pic"><svg viewBox="0 0 38 32"><path d="M14 7.500V22.500h14.500M16 7.500v13h12.500M18.500 7.500v11h10"/></svg></div><figcaption>角点结合</figcaption></figure>
      <figure><div class="pic"><svg viewBox="0 0 38 32"><path d="M6 4.500v25M9.500 4.500v25M13 4.500v25M29 4.500v25M32.500 4.500v25M25.500 4.500v10M25.500 19v10.500"/><path class="ar" d="M15.500 17h6M18.500 14.500l3 2.500-3 2.500"/></svg></div><figcaption>单个剪切</figcaption></figure>
      <figure><div class="pic"><svg viewBox="0 0 38 32"><path d="M4.500 12.800H15.500V4M31 12.800H20V4M4.500 21.500H15.500V30M31 21.500H20V30"/><path d="M4.500 17h27" stroke-dasharray="7 2 4 2"/></svg></div><figcaption>十字打开</figcaption></figure>
      <figure><div class="pic"><svg viewBox="0 0 38 32"><path d="M6.500 8.800h23.500M6.500 16.800H16V25M30 16.800H20V25"/><path d="M6.500 12.800h9M20 12.800h10M17.800 12.800v3" stroke-dasharray="6 1.500"/></svg></div><figcaption>T 形打开</figcaption></figure>
      <figure><div class="pic"><svg viewBox="0 0 38 32"><path d="M6 4.500v25M9.500 4.500v25M13 4.500v25M22.500 4.500L25 17l-2.500 12.500M26 4.500L28.500 17 26 29.500M29.500 4.500L32 17l-2.500 12.500"/><path class="ar" d="M15 17h6M18 14.500l3 2.500-3 2.500"/></svg></div><figcaption>添加顶点</figcaption></figure>
      <figure><div class="pic"><svg viewBox="0 0 38 32"><path d="M6 4.500v25M9.500 4.500v25M13 4.500v25M26 4.500v10M29.500 4.500v10M33 4.500v10M26 19v10.500M29.500 19v10.500M33 19v10.500"/><path class="ar" d="M15.500 17h6M18.500 14.500l3 2.500-3 2.500"/></svg></div><figcaption>全部剪切</figcaption></figure>
      <figure><div class="pic"><svg viewBox="0 0 38 32"><path d="M4.500 12.800H15.500V4M31 12.800H20V4M4.500 21.500H15.500V30M31 21.500H20V30"/><path d="M4.500 17h27M17.800 4v26" stroke-dasharray="5 1.500 3 1.500"/></svg></div><figcaption>十字合并</figcaption></figure>
      <figure><div class="pic"><svg viewBox="0 0 38 32"><path d="M5 11h26M5 19.500H16V28M31 19.500H20V28M18 15v13"/><path d="M5 15.200h26" stroke-dasharray="10 1.500"/></svg></div><figcaption>T 形合并</figcaption></figure>
      <figure><div class="pic"><svg viewBox="0 0 38 32"><path d="M6 4.500L8.500 17 6 29.500M9.500 4.500L12 17 9.500 29.500M13 4.500L15.500 17 13 29.500M26 4.500v25M29.500 4.500v25M33 4.500v25"/><path class="ar" d="M18 17h6M21 14.500l3 2.500-3 2.500"/></svg></div><figcaption>删除顶点</figcaption></figure>
      <figure><div class="pic"><svg viewBox="0 0 38 32"><path d="M6 4.500v10M9.500 4.500v10M13 4.500v10M6 19v10.500M9.500 19v10.500M13 19v10.500M26 4.500v25M29.500 4.500v25M33 4.500v25"/><path class="ar" d="M15.500 17h6M18.500 14.500l3 2.500-3 2.500"/></svg></div><figcaption>全部接合</figcaption></figure>
    </div>
  </fieldset>
  <div class="actions"><button class="b-close">关闭(C)</button><button class="b-help">帮助(H)</button></div>
</section>

<div class="wm-baidu"><b>Ba</b><span>jing</span></div>
<div class="wm-paw"><i></i><i></i></div>
<div class="wm-site">
  <svg viewBox="0 0 200 95">
    <path d="M15 24.500L19 26 22.500 27 27 31 31 33 30 34.500 26 35 24 37.500C23 42 26 47 32 48L43 49.500C49 50.500 51.500 54 50.500 59L48.500 56.500 49 63 50.700 70 50 76H45.500L47 70 42.500 63C38 65.500 31 63.500 26.500 61L24 67 23 76H18L20 66 19 58C13 54 11 47 14 42 17 38 19 35 18 31z" fill="#d2d2d2"/>
    <path d="M22 27.500C26 25 30 29 37 28.500 45 28 48 24 54.500 21.500M24 26c1-3 5-2 11-1.500M26 25.500c-1-3-1-4 1-6M31 25c-2-3 0-4-1-6M36 28c-2-3 1-5 0-9M41 27.500c-1-3 2-4 4-5M45 26c2 0 4-2 5-4" fill="none" stroke="#d2d2d2" stroke-width="1.200"/>
    <text x="64" y="50.500" class="site-3d" textLength="43" lengthAdjust="spacingAndGlyphs">3D</text>
    <text x="108" y="49" class="site-cn" textLength="82" lengthAdjust="spacingAndGlyphs">溜溜网</text>
    <text x="64" y="73" class="site-en" textLength="126" lengthAdjust="spacing">3D66.COM</text>
  </svg>
</div>
</body>
</html>
```
FILE: styles.css
```css
* { box-sizing: border-box; }
body {
  margin: 0; width: 1000px; height: 562px; overflow: hidden; position: relative;
  display: flex; flex-direction: column; background: #666;
  font-family: "Liberation Sans", "Noto Sans CJK SC", sans-serif; font-size: 9px;
}
svg { display: block; flex: none; }
i { display: block; flex: none; }
.defs { position: absolute; }
.tri { border: 2.5px solid transparent; border-top: 3px solid #333; border-bottom: 0; }

/* title bar and menus */
.app-head { display: flex; height: 33px; flex: none; background: #707070; }
.app-btn { width: 30px; height: 30px; display: flex; align-items: center; padding-left: 2px; background: linear-gradient(#b9b9b9, #737373); border: 1px solid #4b4b4b; border-left: 0; }
.app-logo { width: 20px; height: 25px; }
.head-rows { flex: 1; display: flex; flex-direction: column; }
.titlebar { height: 18px; display: flex; align-items: stretch; background: linear-gradient(#b0b0b0, #858585); border-bottom: 1px solid #6a6a6a; }
.qat { width: 145px; display: flex; align-items: center; padding-left: 4px; }
.q { width: 13px; height: 13px; margin: 0 2.3px; color: #555; }
.q-tri { margin-left: -1px; opacity: .7; }
.undo { color: #444; }
.faded { color: #888; }
.ws-combo { width: 130px; height: 15px; margin-top: 1px; background: linear-gradient(#eee, #cfcfcf); border: 1px solid #858585; display: flex; align-items: center; padding: 0 1px; color: #111; font-family: "Noto Sans", "Noto Sans CJK SC", sans-serif; font-size: 9.1px; }
.ws-gear { width: 12px; height: 12px; margin: 0 1px 0 0; }
.ws-combo .tri { margin-left: auto; }
.qat-end { width: 38px; display: flex; align-items: center; gap: 5px; padding-left: 4px; }
.qat-end svg { width: 12px; height: 12px; }
.qat-end .big { border-width: 3px; border-top: 4px solid #111; border-bottom: 0; }
.caption { width: 236px; background: #fff; }
.search-arrow { width: 10px; background: #8f8f8f; display: flex; align-items: center; justify-content: center; }
.search-arrow::after { content: ""; border: 3px solid transparent; border-left: 4px solid #111; border-right: 0; }
.search { width: 131px; background: #fafafa; border: 1px solid #bbb; color: #555; font-style: italic; font-size: 8.3px; line-height: 14px; padding-left: 2px; }
.info { width: 160px; display: flex; align-items: center; padding-left: 2px; }
.info svg { width: 13px; height: 13px; }
.user { margin-left: 5px; }
.login { color: #f4f4f4; font-size: 9.3px; margin-left: 2px; width: 66px; }
.exch { margin: 0 12px 0 6px; }
.ask { margin-right: 6px; }
.winctl { width: 120px; height: 18px; background: #fff; }
.menubar { height: 15px; display: flex; align-items: center; gap: 17.1px; padding-left: 10px; background: linear-gradient(#8b8b8b, #6c6c6c); color: #f1f1f1; font: 9.3px/14px "Open Sans", "Noto Sans CJK SC", sans-serif; white-space: nowrap; border-bottom: 1px solid #555; }
.docctl { width: 34px; height: 12px; margin: 0 1px 0 auto; }

/* horizontal toolbars */
.tools { display: flex; flex: none; height: 18px; align-items: stretch; background: #666; }
.row1 { margin-top: 0; padding: 1px 0; }
.row2 { margin-top: 2px; height: 18px; padding: 1px 0; }
.grip { width: 5.6px; background: #555; border-right: 1px solid #777; }
.grip.wide { width: 6px; border-left: 1px solid #777; }
.row2 .first { width: 9px; }
.row2 .second { width: 7px; }
.strip { display: flex; align-items: center; background: #ececec; }
.t { width: 14.600px; height: 14px; margin: 0 1.1px; color: #555; }
.sep { width: 1px; height: 13px; margin: 0 1.700px; background: #aaa; }
.dim { color: #aeb1b5; }
.t-tri { margin: 0 3px; opacity: .45; }
.std { padding-right: 2px; }
.row1 .wide { width: 7px; }
.bar { width: 5px; align-self: stretch; border: solid #eee; border-width: 0 1.500px; background: #999; }
.combo { display: flex; align-items: center; align-self: stretch; background: #cbcbcb; color: #777; }
.combo span { white-space: nowrap; }
.combo > svg:last-child { width: 8px; height: 8px; margin: 0 2px 0 auto; }
.styles .combo { font: 9px "Noto Sans", sans-serif; padding-left: 14px; }
.w-text { width: 88px; }
.w-dim { width: 88px; }
.styles .w-tab { width: 89px; padding-left: 3px; }
.styles .w-ml { width: 84px; padding-left: 11px; }
.w-ws { width: 128px; padding-left: 7px; font: 9px "Noto Sans", "Noto Sans CJK SC", sans-serif; }
.w-layer { width: 220px; padding-left: 2px; }
.l { width: 10px; height: 11px; margin: 0 1px; }
.swatch { width: 8px; height: 8px; border: 1px solid #333; background: #fff; margin: 0 3px 0 1px; }
.serif .combo { font: 8.8px "Liberation Serif", serif; color: #666; }
.w-color { width: 108px; padding-left: 2px; }
.w-lt { width: 117px; padding-left: 4px; }
.w-lw { width: 92px; padding-left: 3px; }
.w-ps { width: 86px; padding-left: 6px; }
.serif .w-ps { font-size: 7.800px; }
.ln { width: 26px; height: 1px; background: #555; margin-right: 4px; }
.ln.long { width: 44px; }

/* drawing workspace */
.work { display: flex; flex: none; height: 399px; margin-top: 2px; padding-top: 1px; border-top: 1px solid #888; }
.vtools { background: #ebebeb; display: flex; flex-direction: column; align-items: center; }
.vtools svg { width: 13.500px; height: 13.100px; margin: 1.500px 0; flex: none; }
.left { width: 18px; height: 327px; border: 1px solid #555; border-top: 0; }
.right { width: 17px; height: 397px; overflow: hidden; }
.abc { font: bold 6px "DejaVu Sans", sans-serif; fill: #333; }
.vgrip { width: 100%; height: 5px; background: #555; border-bottom: 1px solid #888; }
.vgrip.mid { height: 8px; margin-bottom: 1px; border-top: 2px solid #888; }
.vsep { width: 14px; height: 1px; background: #aaa; margin: 2px 0; }
.doc { width: 956px; margin-left: 4px; border-left: 1px solid #aaa; margin-right: 2px; }
.doc-top { display: flex; height: 384px; }
.canvas { width: 940px; height: 384px; }
.vscroll { width: 13px; background: #efefef; display: flex; flex-direction: column; align-items: center; }
.vscroll svg { width: 12px; height: 12px; }
.thumb { width: 11px; height: 12px; background: #cdcdcd; margin: 239px 0 109px; }
.vp-label { font: 9px "Noto Sans CJK SC", sans-serif; fill: #ddd; }
.cube-face { font: 17px "Noto Sans CJK SC", sans-serif; fill: #4c5560; text-anchor: middle; }
.compass text { font: 10.500px "Noto Sans CJK SC", sans-serif; fill: #bbb; text-anchor: middle; }
.wcs { font: 7.500px "Liberation Sans", sans-serif; fill: #3c3e45; }
.tabs { display: flex; height: 11px; background: #efefef; }
.tabnav { width: 42px; height: 11px; }
.tab { display: flex; align-items: center; font: 8.700px/11px "Liberation Sans", "Noto Sans CJK SC", sans-serif; color: #111; white-space: nowrap; padding-left: 3px; }
.tab i { width: 1px; height: 11px; margin-left: 5.500px; background: #444; transform: skewX(-24deg); }
.tab.active { width: 33px; padding: 0; color: #fff; display: grid; }
.tab.active svg, .tab.active span { grid-area: 1 / 1; }
.tab.active svg { width: 33px; height: 11px; }
.tab.active span { padding-left: 7px; z-index: 1; }
.hscroll { margin-left: auto; width: 332px; display: flex; align-items: center; }
.hscroll svg { width: 10px; height: 10px; }
.split { width: 4px; height: 10px; background: #ccc; margin-right: 4px; }
.hthumb { width: 13px; height: 10px; background: #cdcdcd; margin: 0 160px 0 114px; }

/* command line */
.cmd { display: flex; flex: none; height: 44px; margin-top: 1px; border-top: 1px solid #555; background: #c8c8c8; }
.cmd-grip { width: 12px; background: #a3a3a3; padding: 2px 1px; border-right: 1px solid #c8c8c8; }
.cmd-grip i { height: 3px; border: solid #666; border-width: 1px 0; }
.cmd-body { flex: 1; font: 9.500px/11px "Liberation Mono", "Noto Sans CJK SC", monospace; color: #222; }
.history { height: 30px; padding: 1px 1px; border-bottom: 1px solid #aaa; }
.prompt { height: 13px; background: #fff; padding: 1px 1px; white-space: pre; letter-spacing: -.4px; }

/* drafting status bar */
.status { display: flex; flex: none; height: 16px; align-items: stretch; background: linear-gradient(#9b9b9b, #808080); border-top: 1px solid #666; }
.coords { width: 160px; padding-left: 8px; font: 8px/16px "Liberation Mono", monospace; letter-spacing: -.400px; color: #111; }
.modes { display: flex; }
.modes span { width: 16.050px; border: solid #777; border-width: 0 1px 0 0; background: linear-gradient(#c5c5c5, #989898); display: flex; justify-content: center; align-items: center; }
.modes svg { width: 13px; height: 13px; }
.modes .on { background: #a9d5e2; }
.modes .half { background: #bcd3da; }
.space { margin-left: auto; width: 240px; display: flex; align-items: center; gap: 3px; color: #111; }
.space span { font-size: 9px; background: #bbb; width: 21px; height: 15px; line-height: 15px; border: 1px solid #666; border-width: 0 1px; }
.space svg { width: 12px; height: 12px; }

/* windows taskbar */
.taskbar { display: flex; flex: none; height: 29px; background: #05191e; }
.start { width: 35px; display: flex; align-items: center; justify-content: center; }
.start svg { width: 14px; height: 14px; }
.tb-search { width: 252px; background: #f1f1f1; display: flex; align-items: center; padding: 0 9px 0 7px; color: #333; font: 10.200px "Noto Sans CJK SC", sans-serif; }
.tb-search svg { width: 12px; height: 15px; margin-left: auto; }
.cortana { width: 16px; height: 16px; border: 2.500px solid #111; border-radius: 50%; margin-right: 7px; }
.apps { display: flex; gap: 1px; padding-left: 2px; }
.apps span { width: 35px; display: flex; justify-content: center; align-items: center; background: linear-gradient(#76c9d0, #76c9d0) center bottom / 29px 1.500px no-repeat; }
.apps .cur { background-color: #3d4a4e; background-size: 35px 1.500px; }
.apps svg { width: 17px; height: 17px; }

/* multiline edit tools dialog */
.dialog { position: absolute; left: 314px; top: 94px; width: 372px; height: 342px; border: 1px solid #43a3a9; background: #f0f0f0; color: #111; font: 8.750px "Liberation Mono", "Noto Sans CJK SC", monospace; }
.dlg-title { height: 19px; background: #fff; display: flex; align-items: center; padding: 0 7px 0 2px; }
.dlg-title svg { width: 11px; height: 11px; margin-right: 4px; }
.dlg-title .close { width: 9px; height: 9px; margin: 0 0 0 auto; }
.hint { margin: 0; padding: 4px 8px 0; height: 46px; line-height: 13px; white-space: nowrap; font-family: "Noto Sans CJK SC", sans-serif; }
.group { margin: 0 0 0 7px; padding: 0 0 0 22px; border: 1px solid #dedede; width: 354px; height: 234px; min-width: 0; }
.group legend { margin-left: -20px; padding: 0 2px; line-height: 13px; }
.grid { display: grid; grid-template-columns: repeat(4, 89.700px); grid-auto-rows: 71px; padding-top: 8.500px; }
figure { margin: 0; }
.pic { width: 39px; height: 33px; border: 1px solid #b6b6b6; background: #efefef; }
.pic.sel { border: 1.500px solid #8f8f8f; }
.pic svg { width: 37px; height: 31px; background: linear-gradient(#fff, #fff) 3px 2px / 30px 27px no-repeat; fill: none; stroke: #4a4a4a; stroke-width: 1; }
.pic .ar { stroke: #111; }
figcaption { width: 43px; padding-left: 0; text-align: center; white-space: nowrap; line-height: 13px; margin-top: 4px; word-spacing: -1px; }
.actions { display: flex; gap: 23px; padding: 7px 0 0 210px; }
.actions button { height: 20px; border: 1px solid #adadad; background: #e1e1e1; color: #111; font: inherit; padding: 0; letter-spacing: -.2px; }
.b-close { width: 67px; }
.b-help { width: 59px; }

/* watermarks over the desktop */
.wm-baidu { position: absolute; left: 767px; top: 476px; width: 34px; height: 70px; overflow: hidden; color: rgba(245,245,245,.88); display: flex; flex-direction: column; white-space: nowrap; text-shadow: 0 0 2px #999; }
.wm-baidu b { font: bold 41px/42px "Liberation Sans", sans-serif; }
.wm-baidu span { font: 20px/18px "Liberation Sans", sans-serif; }
.wm-paw { position: absolute; left: 841px; top: 456px; display: flex; gap: 3px; }
.wm-paw i { width: 13px; height: 20px; border-radius: 50%; background: #f8f8f8; box-shadow: 0 0 2px #aaa; }
.wm-site { position: absolute; left: 800px; top: 467px; width: 200px; height: 95px; background: #222f56; }
.site-3d { font: 37px "Roboto", sans-serif; fill: #d2d2d2; }
.site-cn { font: 500 28px "Noto Sans CJK SC", sans-serif; fill: #d2d2d2; }
.site-en { font: 22px "Roboto", sans-serif; fill: #d2d2d2; }
```
